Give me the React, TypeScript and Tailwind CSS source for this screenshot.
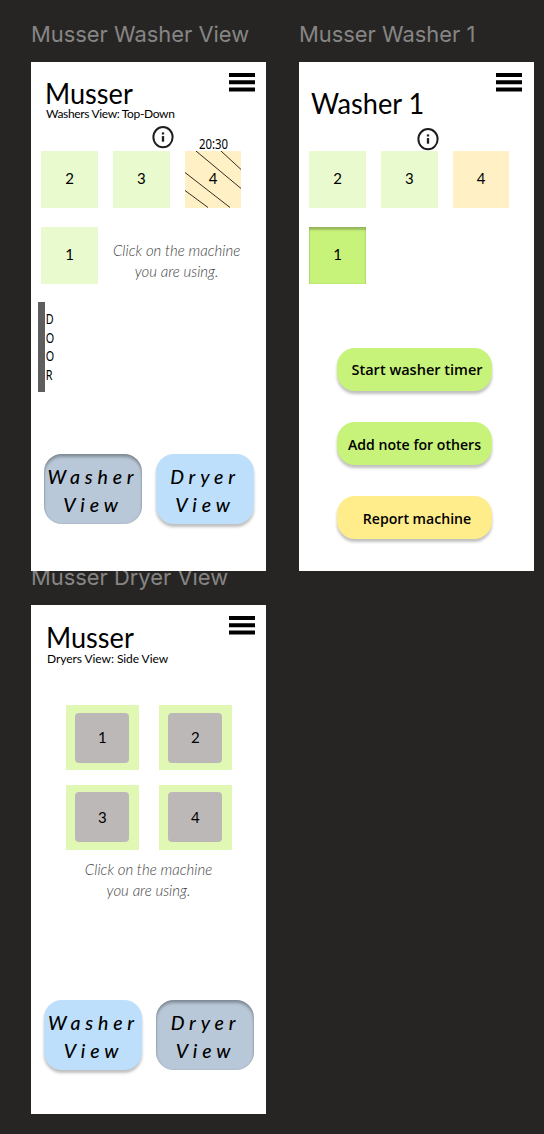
import type { ReactNode } from "react";

function Menu() {
  return (
    <svg className="block h-5 w-[26px] shrink-0" viewBox="0 0 26 20" aria-label="Menu">
      <path d="M0 0h26v4H0zM0 7.2h26v4H0zM0 14.4h26v4.2H0z" fill="#000" />
    </svg>
  );
}

function Info() {
  return (
    <svg className="block h-[23px] w-[22px] shrink-0" viewBox="0 0 22 23" fill="none" stroke="#1d1d20">
      <ellipse cx="11" cy="11.2" rx="9.6" ry="10.1" strokeWidth="2" />
      <path d="M11 10.1v5.6" strokeWidth="2.3" />
      <path d="M11 6.4v2.1" strokeWidth="2.3" />
    </svg>
  );
}

function Caption({ children }: { children: ReactNode }) {
  return (
    <div className="whitespace-nowrap font-['Inter',sans-serif] text-[21.9px] leading-[28px] text-[#868584]">
      {children}
    </div>
  );
}

function Frame({ children }: { children: ReactNode }) {
  return (
    <section className="relative flex h-[508.5px] w-[235px] shrink-0 flex-col bg-white">{children}</section>
  );
}

type HeaderProps = {
  title: string;
  subtitle?: string;
  className: string;
  subtitleClass?: string;
  menuClass?: string;
};

function Header({ title, subtitle, className, subtitleClass = "", menuClass = "pr-[11px]" }: HeaderProps) {
  return (
    <header className={`flex h-[65px] shrink-0 justify-between pt-[11px] ${menuClass}`}>
      <div className={`whitespace-nowrap ${className}`}>
        <h1 className="-ml-px origin-left scale-x-[0.92] text-[29.5px] leading-[30px]">{title}</h1>
        {subtitle && <p className={`text-[12px] leading-[12px] ${subtitleClass}`}>{subtitle}</p>}
      </div>
      <Menu />
    </header>
  );
}

const tileTones = {
  free: "bg-[#eafacf]",
  busy: "bg-[#fff0c5]",
  pressed:
    "bg-[#c8f37a] shadow-[inset_0_3px_2px_rgba(0,0,0,0.22),inset_0_0_2px_rgba(0,0,0,0.15)]",
};

function Tile({ label, tone = "free", time }: { label: string; tone?: keyof typeof tileTones; time?: string }) {
  return (
    <div className={`relative flex h-[56.5px] w-[56.6px] items-center justify-center text-[15px] ${tileTones[tone]}`}>
      {time && (
        <>
          <svg className="absolute inset-0 size-full" viewBox="0 0 56.6 56.5" stroke="#302c22" strokeWidth="1">
            <path d="M36 0 56.6 19M11 0 56.6 38M0 21.5 45 56.5M0 39.5 23 56.5" />
          </svg>
          <span className="absolute -top-[17px] left-[14.5px] origin-left scale-x-[0.76] whitespace-nowrap font-['Noto_Sans',sans-serif] text-[15px] leading-[18px]">
            {time}
          </span>
        </>
      )}
      <span className="relative -top-px">{label}</span>
    </div>
  );
}

function Tip() {
  return (
    <p className="whitespace-nowrap text-center text-[15px] font-light italic leading-[21px] text-[#444]">
      Click on the machine
      <br />
      you are using.
    </p>
  );
}

function ViewButton({ name, active }: { name: string; active?: boolean }) {
  return (
    <button
      className={`flex h-[70px] w-[98px] justify-center whitespace-nowrap rounded-[18px] pl-px pt-[9px] text-center text-[19.5px] font-medium italic leading-[28px] ${
        active
          ? "bg-[#b9c8d8] shadow-[inset_0_3px_3px_rgba(0,0,0,0.28),inset_0_0_2px_rgba(0,0,0,0.18)]"
          : "bg-[#bddffb] shadow-[0_3px_3px_rgba(0,0,0,0.25)]"
      }`}
    >
      <span>
        <span className="tracking-[4.8px]">{name}</span>
        <br />
        <span className="tracking-[4.8px]">View</span>
      </span>
    </button>
  );
}

function DryerTile({ label }: { label: string }) {
  return (
    <div className="flex h-[65px] w-[73.5px] items-center justify-center bg-[#e1f8b5]">
      <div className="flex h-[50px] w-[54px] items-center justify-center rounded-[4px] bg-[#bcb8b7] text-[15px]">
        {label}
      </div>
    </div>
  );
}

function ActionButton({ children, className }: { children: ReactNode; className: string }) {
  return (
    <button
      className={`flex h-[43.5px] w-[155px] items-center justify-center whitespace-nowrap rounded-[18px] pt-[2px] font-['Open_Sans',sans-serif] font-semibold shadow-[0_3px_3px_rgba(0,0,0,0.25)] ${className}`}
    >
      {children}
    </button>
  );
}

export default function App() {
  return (
    <main className="flex h-[1134px] w-[544px] gap-[33px] overflow-hidden bg-[#262524] pl-[31px] pt-[20px] font-['Lato',sans-serif] text-black">
      <div className="flex w-[235px] shrink-0 flex-col">
        <Caption>Musser Washer View</Caption>
        <div className="relative z-10 mt-[14px]">
          <Frame>
            <Header
              title="Musser"
              subtitle="Washers View: Top-Down"
              className="pl-[15px] pt-[5px]"
              subtitleClass="-tracking-[0.34px]"
            />
            <div className="flex h-[24px] shrink-0 items-start pl-[120.5px]">
              <div className="-mt-px">
                <Info />
              </div>
            </div>
            <div className="flex gap-[15.2px] pl-[10.3px]">
              <Tile label="2" />
              <Tile label="3" />
              <Tile label="4" tone="busy" time="20:30" />
            </div>
            <div className="mt-[19.5px] flex items-center gap-[15px] pl-[10.3px]">
              <Tile label="1" />
              <div className="pt-[11px]">
                <Tip />
              </div>
            </div>
            <div className="mt-[18.5px] flex pl-[6.5px]">
              <div className="h-[90px] w-[7.5px] bg-[#5e5e5e]" />
              <div className="h-[90px] origin-left scale-x-[0.72] pl-px pt-[7px] font-['Noto_Sans',sans-serif] text-[15px] leading-[18.6px]">
                D<br />O<br />O<br />R
              </div>
            </div>
            <div className="mt-[61.5px] flex gap-[14px] pl-[12.5px]">
              <ViewButton name="Washer" active />
              <ViewButton name="Dryer" />
            </div>
          </Frame>
        </div>
        <div className="-mt-[7.5px]">
          <Caption>Musser Dryer View</Caption>
        </div>
        <div className="mt-[14px]">
          <Frame>
            <Header
              title="Musser"
              subtitle="Dryers View: Side View"
              className="pl-[16px] pt-[6px]"
              subtitleClass="relative top-px -tracking-[0.06px]"
            />
            <div className="mt-[35px] grid grid-cols-[73.5px_73.5px] gap-x-[19.5px] gap-y-[14.5px] pl-[34.6px]">
              <DryerTile label="1" />
              <DryerTile label="2" />
              <DryerTile label="3" />
              <DryerTile label="4" />
            </div>
            <div className="mt-[9px]">
              <Tip />
            </div>
            <div className="mt-[99.2px] flex gap-[14px] pl-[13px]">
              <ViewButton name="Washer" />
              <ViewButton name="Dryer" active />
            </div>
          </Frame>
        </div>
      </div>
      <div className="flex w-[235px] shrink-0 flex-col">
        <Caption>Musser Washer 1</Caption>
        <div className="mt-[14px]">
          <Frame>
            <Header title="Washer 1" className="pl-[13px] pt-[15px]" menuClass="pr-[12px]" />
            <div className="flex h-[24px] shrink-0 items-end pl-[117.5px]">
              <Info />
            </div>
            <div className="flex gap-[15.2px] pl-[10.3px]">
              <Tile label="2" />
              <Tile label="3" />
              <Tile label="4" tone="busy" />
            </div>
            <div className="mt-[19.5px] pl-[10.3px]">
              <Tile label="1" tone="pressed" />
            </div>
            <div className="mt-[64px] flex flex-col gap-[30.5px] pl-[38px]">
              <ActionButton className="bg-[#c8f37a] pl-[5px] text-[14.5px]">Start washer timer</ActionButton>
              <ActionButton className="bg-[#c8f37a] text-[14.1px]">Add note for others</ActionButton>
              <ActionButton className="bg-[#ffed8b] pl-[5px] text-[14.1px]">Report machine</ActionButton>
            </div>
          </Frame>
        </div>
      </div>
    </main>
  );
}
